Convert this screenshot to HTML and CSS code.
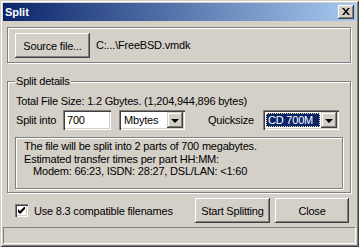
FILE: index.html
```html
<!DOCTYPE html>
<html lang="en">
<head>
    <meta charset="UTF-8">
    <title>Split</title>
    <link rel="stylesheet" href="styles.css">
</head>
<body>
    <div class="window">
        <div class="titlebar">
            <span class="title">Split</span>
            <div class="close-btn">
                <svg width="8" height="7" viewBox="0 0 8 7">
                    <path d="M0 0h2l2 2.5 2-2.5h2l-3 3.5 3 3.5h-2l-2-2.5-2 2.5h-2l3-3.5z" fill="#000"/>
                </svg>
            </div>
        </div>

        <div class="dialog">
            <div class="group source-group">
                <div class="btn source-btn">Source file...</div>
                <span class="path">C:...\FreeBSD.vmdk</span>
            </div>

            <div class="group details-group">
                <span class="group-label">Split details</span>
                <div class="total">Total File Size: 1.2 Gbytes. (1,204,944,896 bytes)</div>
                <div class="split-row">
                    <span class="split-label">Split into</span>
                    <div class="edit">700</div>
                    <div class="combo unit-combo">
                        <span class="combo-text">Mbytes</span>
                        <span class="combo-btn"><i class="arrow"></i></span>
                    </div>
                    <span class="quick-label">Quicksize</span>
                    <div class="combo quick-combo">
                        <span class="combo-text"><span class="sel">CD 700M</span></span>
                        <span class="combo-btn"><i class="arrow"></i></span>
                    </div>
                </div>
                <div class="info">
                    <div>The file will be split into 2 parts of 700 megabytes.</div>
                    <div>Estimated transfer times per part HH:MM:</div>
                    <div class="indent">Modem: 66:23, ISDN: 28:27, DSL/LAN: &lt;1:60</div>
                </div>
            </div>

            <div class="bottom-row">
                <div class="check">
                    <span class="checkbox">
                        <svg width="7" height="7" viewBox="0 0 7 7">
                            <path d="M0 2v3l2 2 5-5v-3l-5 5z" fill="#000"/>
                        </svg>
                    </span>
                    <span>Use 8.3 compatible filenames</span>
                </div>
                <div class="buttons">
                    <div class="btn start-btn">Start Splitting</div>
                    <div class="btn close-dlg">Close</div>
                </div>
            </div>
        </div>

        <div class="statusbar"></div>
    </div>
</body>
</html>
```

FILE: styles.css
```css
body {
    margin: 0;
    font-family: "Liberation Sans", Arial, sans-serif;
    font-size: 11px;
    letter-spacing: -0.2px;
    color: #000;
}
.window {
    width: 359px;
    height: 247px;
    box-sizing: border-box;
    padding: 3px;
    background: #d4d0c8;
    box-shadow: inset 1px 1px #d4d0c8, inset -1px -1px #404040, inset 2px 2px #fff, inset -2px -2px #808080;
    display: flex;
    flex-direction: column;
}
.titlebar {
    height: 18px;
    flex: none;
    background: linear-gradient(to right, #0a246a, #a6caf0);
    display: flex;
    align-items: center;
    justify-content: space-between;
    padding: 0 2px;
}
.title {
    color: #fff;
    font-weight: bold;
    letter-spacing: 0;
}
.close-btn {
    width: 16px;
    height: 14px;
    background: #d4d0c8;
    box-shadow: inset -1px -1px #404040, inset 1px 1px #fff, inset -2px -2px #808080;
    display: flex;
    align-items: center;
    justify-content: center;
}
.close-btn svg {
    display: block;
    margin-top: -1px;
}
.dialog {
    padding: 6px 5px 0 4px;
}
.group {
    border: 1px solid #808080;
    box-shadow: inset 1px 1px #fff, 1px 1px #fff;
}
.btn {
    box-sizing: border-box;
    height: 25px;
    background: #d4d0c8;
    box-shadow: inset -1px -1px #404040, inset 1px 1px #fff, inset -2px -2px #808080;
    display: flex;
    align-items: center;
    justify-content: center;
}
.source-group {
    box-sizing: border-box;
    height: 36px;
    display: flex;
    align-items: flex-start;
    padding: 5px 0 0 7px;
}
.source-btn {
    width: 75px;
}
.path {
    margin-left: 6px;
    line-height: 25px;
}
.details-group {
    margin-top: 18px;
    position: relative;
    padding: 13px 7px 3px;
}
.group-label {
    position: absolute;
    top: -7px;
    left: 7px;
    padding: 0 1px;
    line-height: 13px;
    background: #d4d0c8;
}
.total {
    line-height: 13px;
    padding-left: 1px;
}
.split-row {
    margin-top: 2px;
    height: 20px;
    display: flex;
    align-items: center;
}
.split-label {
    width: 48px;
    padding-left: 1px;
    box-sizing: border-box;
}
.edit,
.combo {
    box-sizing: border-box;
    height: 20px;
    background: #fff;
    box-shadow: inset 1px 1px #808080, inset 2px 2px #404040, inset -1px -1px #fff, inset -2px -2px #d4d0c8;
}
.edit {
    width: 48px;
    padding: 0 4px;
    line-height: 20px;
}
.combo {
    display: flex;
    padding: 2px;
}
.unit-combo {
    width: 66px;
    margin-left: 8px;
}
.quick-combo {
    width: 76px;
}
.combo-text {
    flex: 1;
    display: flex;
    align-items: center;
    padding-left: 3px;
}
.quick-combo .combo-text {
    padding: 1px;
}
.sel {
    flex: 1;
    align-self: stretch;
    background: #0a246a;
    color: #fff;
    padding-left: 2px;
    line-height: 14px;
    outline: 1px dotted #f0e68c;
    outline-offset: -1px;
}
.combo-btn {
    width: 16px;
    background: #d4d0c8;
    box-shadow: inset -1px -1px #404040, inset 1px 1px #d4d0c8, inset -2px -2px #808080, inset 2px 2px #fff;
    display: flex;
    align-items: center;
    justify-content: center;
}
.arrow {
    width: 0;
    height: 0;
    border-left: 4px solid transparent;
    border-right: 4px solid transparent;
    border-top: 4px solid #000;
    margin-top: 1px;
}
.quick-label {
    width: 55px;
    margin-left: 23px;
}
.info {
    box-sizing: border-box;
    height: 52px;
    margin-top: 7px;
    padding: 2px 8px 0;
    line-height: 12.5px;
    border: 1px solid #808080;
    box-shadow: inset 1px 1px #fff, 1px 1px #fff;
}
.indent {
    padding-left: 9px;
}
.bottom-row {
    margin-top: 5px;
    height: 25px;
    display: flex;
    align-items: center;
    justify-content: space-between;
    padding: 0 2px 0 8px;
}
.check {
    display: flex;
    align-items: center;
    gap: 6px;
}
.checkbox {
    width: 13px;
    height: 13px;
    box-sizing: border-box;
    background: #fff;
    box-shadow: inset 1px 1px #808080, inset 2px 2px #404040, inset -1px -1px #fff, inset -2px -2px #d4d0c8;
    display: flex;
    align-items: center;
    justify-content: center;
}
.buttons {
    display: flex;
    gap: 5px;
}
.start-btn {
    width: 75px;
}
.close-dlg {
    width: 74px;
}
.statusbar {
    margin-top: 4px;
    height: 17px;
    box-sizing: border-box;
    border-top: 1px solid #808080;
    border-left: 1px solid #808080;
    border-bottom: 1px solid #fff;
    border-right: 1px solid #fff;
}
```
